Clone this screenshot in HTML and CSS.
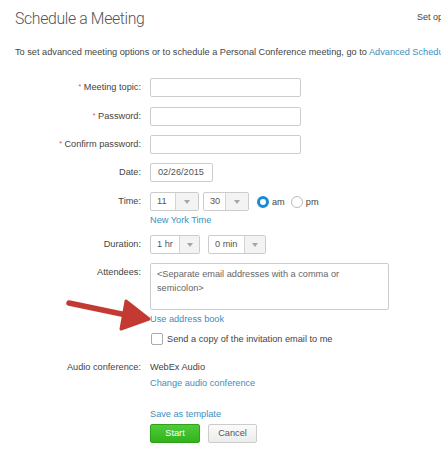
FILE: index.html
```html
<!DOCTYPE html>
<html>
<head>
<meta charset="utf-8">
<link rel="stylesheet" href="styles.css">
</head>
<body>
<div class="page">
  <div class="header">
    <h1 class="title">Schedule a Meeting</h1>
    <span class="setopt">Set options</span>
  </div>
  <p class="intro">To set advanced meeting options or to schedule a Personal Conference meeting, go to <a class="link">Advanced Scheduler</a>.</p>

  <div class="form">
    <div class="row gap10">
      <div class="lbl"><span class="req">*</span> Meeting topic:</div>
      <div class="field"><div class="text wide"></div></div>
    </div>
    <div class="row gap9">
      <div class="lbl"><span class="req">*</span> Password:</div>
      <div class="field"><div class="text wide"></div></div>
    </div>
    <div class="row gap9">
      <div class="lbl"><span class="req">*</span> Confirm password:</div>
      <div class="field"><div class="text wide"></div></div>
    </div>
    <div class="row gap10">
      <div class="lbl">Date:</div>
      <div class="field"><div class="text date">02/26/2015</div></div>
    </div>
    <div class="row gap8">
      <div class="lbl">Time:</div>
      <div class="field">
        <div class="inline">
          <div class="select s-hr"><span class="val">11</span><span class="btn"><i class="tri"></i></span></div>
          <div class="select s-min"><span class="val">30</span><span class="btn"><i class="tri"></i></span></div>
          <span class="radio on"></span><span class="rtext">am</span>
          <span class="radio"></span><span class="rtext">pm</span>
        </div>
        <a class="link sub">New York Time</a>
      </div>
    </div>
    <div class="row gap9">
      <div class="lbl">Duration:</div>
      <div class="field">
        <div class="inline">
          <div class="select s-dur"><span class="val">1 hr</span><span class="btn"><i class="tri"></i></span></div>
          <div class="select s-dmin"><span class="val">0 min</span><span class="btn"><i class="tri"></i></span></div>
        </div>
      </div>
    </div>
    <div class="row gap14">
      <div class="lbl top">Attendees:</div>
      <div class="field">
        <div class="area">&lt;Separate email addresses with a comma or semicolon&gt;</div>
        <a class="link sub2">Use address book</a>
        <div class="check-row"><span class="check"></span><span>Send a copy of the invitation email to me</span></div>
      </div>
    </div>
    <div class="row gap17">
      <div class="lbl line">Audio conference:</div>
      <div class="field">
        <div class="plain">WebEx Audio</div>
        <a class="link plain p2">Change audio conference</a>
      </div>
    </div>
    <div class="row">
      <div class="lbl"></div>
      <div class="field">
        <a class="link plain">Save as template</a>
        <div class="buttons">
          <span class="button start">Start</span>
          <span class="button cancel">Cancel</span>
        </div>
      </div>
    </div>
  </div>

  <svg class="arrow" width="100" height="40" viewBox="55 295 100 40">
    <line x1="69" y1="303" x2="136" y2="317" stroke="#c33a33" stroke-width="5.5" stroke-linecap="round"/>
    <polygon points="126,301 149,319 121,329" fill="#c33a33" stroke="#c33a33" stroke-width="3" stroke-linejoin="round"/>
  </svg>
</div>
</body>
</html>
```

FILE: styles.css
```css
* { box-sizing: border-box; }
html, body { margin: 0; padding: 0; background: #fff; }
body {
  width: 441px;
  height: 450px;
  overflow: hidden;
  font-family: "Liberation Sans", Arial, sans-serif;
  font-size: 9.2px;
  color: #444;
}
.page { position: relative; }
.header {
  display: grid;
  grid-template-columns: 402px auto;
  align-items: start;
  width: 500px;
  padding: 7px 0 0 15px;
  height: 40px;
}
.title {
  margin: 0;
  font-family: "Roboto", "Liberation Sans", sans-serif;
  font-weight: 300;
  font-size: 15.8px;
  letter-spacing: -0.35px;
  line-height: 24px;
  color: #555;
  white-space: nowrap;
}
.setopt {
  margin-top: 5px;
  font-size: 9px;
  color: #444;
  white-space: nowrap;
}
.intro {
  margin: 5px 0 0 15px;
  white-space: nowrap;
  line-height: 14px;
  color: #444;
}
.link { color: #3a8fc0; text-decoration: none; }
.form {
  margin-top: 19px;
  display: flex;
  flex-direction: column;
}
.row {
  display: grid;
  grid-template-columns: 141px 1fr;
  column-gap: 9px;
}
.gap8 { margin-bottom: 8px; }
.gap9 { margin-bottom: 9px; }
.gap10 { margin-bottom: 10px; }
.gap14 { margin-bottom: 14px; }
.gap17 { margin-bottom: 17px; }
.lbl {
  text-align: right;
  line-height: 19px;
  height: 19px;
  color: #444;
  white-space: nowrap;
}
.lbl.line { line-height: 14px; height: 14px; }
.req { color: #e04a3a; font-size: 7px; line-height: 0; vertical-align: 1px; }
.field { display: flex; flex-direction: column; align-items: flex-start; }
.text {
  height: 19px;
  border: 1px solid #ccc;
  border-radius: 2px;
  background: #fff;
  padding: 0 7px;
  line-height: 17px;
  color: #555;
}
.text.wide { width: 151px; }
.text.date { width: 63px; }
.inline { display: flex; align-items: center; height: 19px; }
.select {
  display: flex;
  height: 19px;
  border: 1px solid #ccc;
  border-radius: 2px;
  background: #fff;
  margin-right: 4px;
}
.select .val { flex: 1; padding-left: 6px; line-height: 17px; color: #555; }
.select .btn {
  width: 23px;
  border-left: 1px solid #d4d4d4;
  background: #f3f3f3;
  display: flex;
  align-items: center;
  justify-content: center;
}
.tri {
  width: 0; height: 0;
  border-left: 3.5px solid transparent;
  border-right: 3.5px solid transparent;
  border-top: 4px solid #a5a5a5;
}
.s-hr { width: 49px; }
.s-min { width: 46px; margin-right: 8px; }
.s-dur { width: 50px; margin-right: 8px; }
.s-dur .btn { width: 20px; }
.s-dmin { width: 58px; }
.s-dmin .btn { width: 21px; }
.radio {
  width: 12px; height: 12px;
  border-radius: 50%;
  border: 1px solid #bbb;
  background: #fff;
  margin-right: 3px;
}
.radio.on {
  border: 3.5px solid #1a8ad4;
  background: #fff;
}
.rtext { margin-right: 6px; color: #444; }
.sub { line-height: 14px; margin-top: 2px; }
.area {
  width: 239px;
  height: 47px;
  border: 1px solid #ccc;
  border-radius: 2px;
  padding: 3px 6px;
  line-height: 14px;
  color: #666;
}
.sub2 { line-height: 14px; margin-top: 2px; }
.check-row { display: flex; align-items: center; margin-top: 6px; height: 14px; }
.check {
  width: 12px; height: 12px;
  border: 1px solid #aaa;
  border-radius: 2px;
  background: #fff;
  margin: 0 4px 0 1px;
}
.plain { line-height: 14px; }
.p2 { margin-top: 2px; }
.buttons { display: flex; gap: 8px; margin-top: 3px; }
.button {
  height: 19px;
  line-height: 17px;
  text-align: center;
  border-radius: 2px;
}
.start {
  width: 50px;
  background: linear-gradient(#4fcb3a, #30b31a);
  border: 1px solid #2ea21a;
  color: #fff;
}
.cancel {
  width: 49px;
  background: linear-gradient(#fbfbfb, #ececec);
  border: 1px solid #ccc;
  color: #555;
}
.arrow {
  position: absolute;
  left: 55px;
  top: 295px;
}
```
